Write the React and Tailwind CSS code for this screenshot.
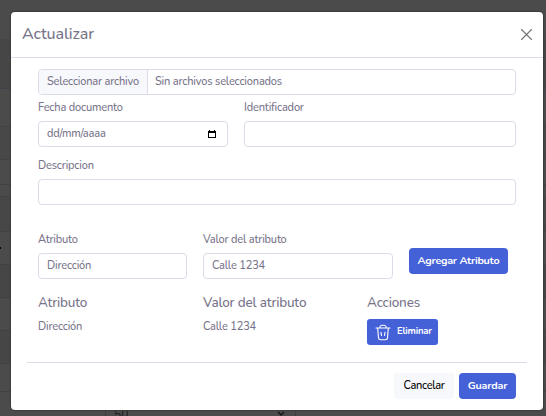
import React from "react";

const field = "h-[26px] rounded-[4px] border border-[#dddbea] bg-white px-2 flex items-center";

function Label({ children }) {
  return <div className="h-[14px] whitespace-nowrap pt-px leading-[14px]">{children}</div>;
}

function Backdrop() {
  return (
    <div className="flex h-full flex-col bg-[#4b4b4b] text-black">
      <div className="h-[39px] shrink-0" />
      <div className="h-[50px] shrink-0 border-b border-[#41424a] bg-[#464646]" />
      <div className="h-[38px] shrink-0 border-b border-[#424242]" />
      <div className="h-[33px] shrink-0 border-b border-[#414141] bg-[#484848]" />
      <div className="h-[25px] shrink-0 border-b border-[#414141]" />
      <div className="h-[12px] shrink-0 border-b border-[#414141]" />
      <div className="h-[35px] shrink-0 border-b border-[#414141] bg-[#474747]" />
      <div className="flex h-[33px] shrink-0 items-center border-b border-[#414141]">
        <div className="h-[2px] w-[1px] bg-black" />
      </div>
      <div className="h-[33px] shrink-0 border-b border-[#414141] bg-[#464646]" />
      <div className="h-[33px] shrink-0 border-b border-[#414141]" />
      <div className="h-[33px] shrink-0 border-b border-[#414141] bg-[#464646]" />
      <div className="h-[28px] shrink-0 border-b border-[#414141]" />
      <div className="flex h-[24px] shrink-0 overflow-hidden">
        <div className="ml-[105px] flex h-[44px] w-[191px] items-center justify-between border-x border-[#3e3e42] pl-2 pr-[10px] text-[12px] tracking-normal text-[#202024]">
          <span>50</span>
          <svg width="8" height="6" viewBox="0 0 8 6" fill="none" stroke="#181818" strokeWidth="1.5">
            <path d="M1 1l3 3 3-3" />
          </svg>
        </div>
      </div>
    </div>
  );
}

function TrashIcon() {
  return (
    <svg width="16" height="17" viewBox="0 0 16 17" fill="none" stroke="white" strokeWidth="1.1" strokeLinecap="round" strokeLinejoin="round">
      <path d="M1 4h14M4.500 3.800c.5-1.700 1.200-2.600 2.300-2.600h2.400c1.100 0 1.800.9 2.300 2.600M2.700 4.200l.8 9.700c.1 1.200.8 1.800 2 1.800h5c1.200 0 1.900-.6 2-1.800l.8-9.700M6 8.300l.5 3.200M10 8.300l-.5 3.200" />
    </svg>
  );
}

export default function App() {
  return (
    <div className="relative h-[416px] w-[546px] overflow-hidden font-['Nunito','Lato',sans-serif] text-[11px] font-medium tracking-[-0.18px] text-[#77748a]">
      <Backdrop />
      <div className="absolute left-[11px] top-[12px] flex h-[398px] w-[532px] flex-col rounded-[4px] bg-white shadow-[0_0_1px_1px_#3c3c3c]">
        <header className="flex h-[46px] shrink-0 items-center justify-between border-b border-[#dddbea] pl-[11px] pr-[11px]">
          <h1 className="-mt-[2px] text-[16px] font-medium leading-5 tracking-[-0.08px]">Actualizar</h1>
          <svg className="-mt-[1px]" width="11" height="11" viewBox="0 0 11 11" stroke="#777" strokeWidth="1.2" strokeLinecap="round">
            <path d="M.5.5l10 10M10.500.5l-10 10" />
          </svg>
        </header>

        <main className="flex flex-col px-[27px] pt-[11px]">
          <div className="flex h-[26px] overflow-hidden rounded-[4px] border border-[#dddbea]">
            <div className="flex w-[109px] items-center whitespace-nowrap border-r border-[#dddbea] bg-[#f7f8fc] pl-2">Seleccionar archivo</div>
            <div className="flex items-center pl-[7px]">Sin archivos seleccionados</div>
          </div>

          <div className="mt-[5px] flex gap-4">
            <div className="flex w-[190px] flex-col gap-[7px]">
              <Label>Fecha documento</Label>
              <div className={field + " justify-between"}>
                <span>dd/mm/aaaa</span>
                <svg className="mr-[3px]" width="8" height="8" viewBox="0 0 8 8">
                  <path fill="#000" fillRule="evenodd" d="M1 0h1v1h4V0h1v1h1v7H0V1h1zM1 3v4h6V3z" />
                </svg>
              </div>
            </div>
            <div className="flex flex-1 flex-col gap-[7px]">
              <Label>Identificador</Label>
              <div className={field} />
            </div>
          </div>

          <div className="mt-[11px] flex flex-col gap-[7px]">
            <Label>Descripcion</Label>
            <div className={field} />
          </div>

          <div className="mt-[27px] flex gap-4">
            <div className="flex w-[149px] flex-col gap-[7px]">
              <Label>Atributo</Label>
              <div className={field}>Dirección</div>
            </div>
            <div className="flex w-[190px] flex-col gap-[7px]">
              <Label>Valor del atributo</Label>
              <div className={field}>Calle 1234</div>
            </div>
            <button className="mt-4 h-[26px] w-[99px] whitespace-nowrap rounded-[4px] bg-[#4461d7] text-[10.75px] font-bold tracking-[-0.25px] text-white">Agregar Atributo</button>
          </div>

          <div className="mt-4 grid grid-cols-[165px_164px_1fr] text-[13.5px] leading-4">
            <div>Atributo</div>
            <div>Valor del atributo</div>
            <div>Acciones</div>
          </div>
          <div className="mt-2 grid h-[26px] grid-cols-[165px_164px_71px] leading-[14px]">
            <div className="pt-px">Dirección</div>
            <div className="pt-px">Calle 1234</div>
            <button className="flex h-[26px] items-center rounded-[3px] bg-[#4461d7] pl-2 text-[9.5px] font-bold text-white">
              <TrashIcon />
              <span className="-mt-[2px] ml-[6px]">Eliminar</span>
            </button>
          </div>
        </main>

        <footer className="mx-4 mt-[17px] flex justify-end gap-[5px] border-t border-[#dddbea] pr-[11px] pt-[10px]">
          <button className="h-[26px] w-[60px] rounded-[4px] bg-[#f7f8fc] tracking-[-0.3px] text-black">Cancelar</button>
          <button className="h-[26px] w-[57px] rounded-[4px] bg-[#4461d7] text-[10.75px] font-bold text-white">Guardar</button>
        </footer>
      </div>
    </div>
  );
}
